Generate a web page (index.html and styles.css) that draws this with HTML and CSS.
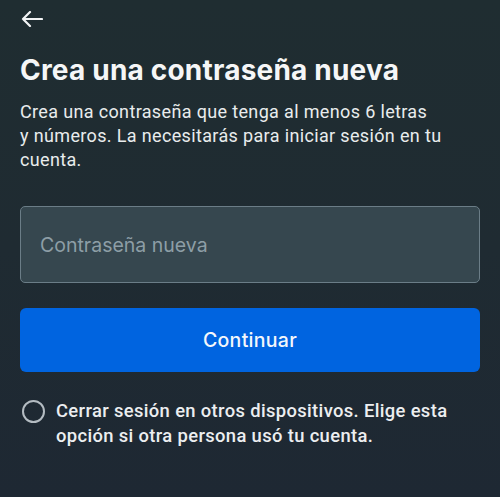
FILE: index.html
```html
<!DOCTYPE html>
<html lang="es">
<head>
    <meta charset="UTF-8">
    <meta name="viewport" content="width=device-width, initial-scale=1.0">
    <title>Crea una contraseña nueva</title>
    <link rel="stylesheet" href="styles.css">
</head>
<body>

    <div class="screen">
        <div class="top-bar">
            <a href="#" class="back-btn" aria-label="Atrás">
                <svg width="22" height="16" viewBox="0 0 22 16">
                    <path d="M21 8H2M9 1L2 8l7 7" fill="none" stroke="#f2f4f5" stroke-width="2.2" stroke-linecap="round" stroke-linejoin="round"/>
                </svg>
            </a>
        </div>

        <h1 class="title">Crea una contraseña nueva</h1>
        <p class="intro">Crea una contraseña que tenga al menos 6 letras<br>y números. La necesitarás para iniciar sesión en tu cuenta.</p>

        <form class="pw-form" onsubmit="return false;">
            <input type="password" class="pw-input" placeholder="Contraseña nueva">
            <button type="submit" class="btn-primary">Continuar</button>

            <label class="logout-opt">
                <span class="radio"></span>
                <span class="opt-text">Cerrar sesión en otros dispositivos. Elige esta opción si otra persona usó tu cuenta.</span>
            </label>
        </form>
    </div>

</body>
</html>
```

FILE: styles.css
```css
* { margin: 0; padding: 0; box-sizing: border-box; }
html, body { height: 100%; }
body {
    background: linear-gradient(180deg, #1f2d31 0%, #1f2b32 50%, #1e2833 100%);
    color: #f2f4f5; font-family: 'Roboto', 'Liberation Sans', sans-serif;
}

.screen { padding: 0 20px; }

.top-bar { height: 38px; display: flex; align-items: center; }
.back-btn { display: flex; margin-left: 1px; }

.title {
    margin-top: 15px; font-family: 'Inter', 'Roboto', sans-serif;
    font-size: 28px; font-weight: 700; line-height: 34px; color: #f5f6f7;
    letter-spacing: 0.2px;
}

.intro {
    margin-top: 13px; font-size: 18px; line-height: 24px; color: #e9eced;
    letter-spacing: 0.35px;
}

.pw-form { margin-top: 34px; display: flex; flex-direction: column; }

.pw-input {
    width: 100%; height: 77px; padding: 0 19px;
    background: #36474f; border: 1.5px solid #6b7d87; border-radius: 5px;
    font-family: 'Inter', 'Roboto', sans-serif; font-size: 19.5px; color: #e9eced;
    outline: none;
}
.pw-input::placeholder { color: #8d9ea6; }

.btn-primary {
    margin-top: 25px; height: 64px; width: 100%;
    background: #0064e0; border: none; border-radius: 6px;
    font-family: 'Inter', 'Roboto', sans-serif; font-size: 19.5px; font-weight: 500;
    color: #f4f7fb; letter-spacing: 0.3px; cursor: pointer;
}

.logout-opt { margin-top: 27px; display: flex; gap: 11px; cursor: pointer; }
.radio {
    flex: none; width: 23px; height: 23px; margin-left: 2px; margin-top: 1px;
    border: 2.2px solid #b4bcc2; border-radius: 50%;
}
.opt-text {
    font-size: 18.4px; font-weight: 500; line-height: 25px; color: #eceef0;
    letter-spacing: 0.35px; margin-top: -1px;
}
```
